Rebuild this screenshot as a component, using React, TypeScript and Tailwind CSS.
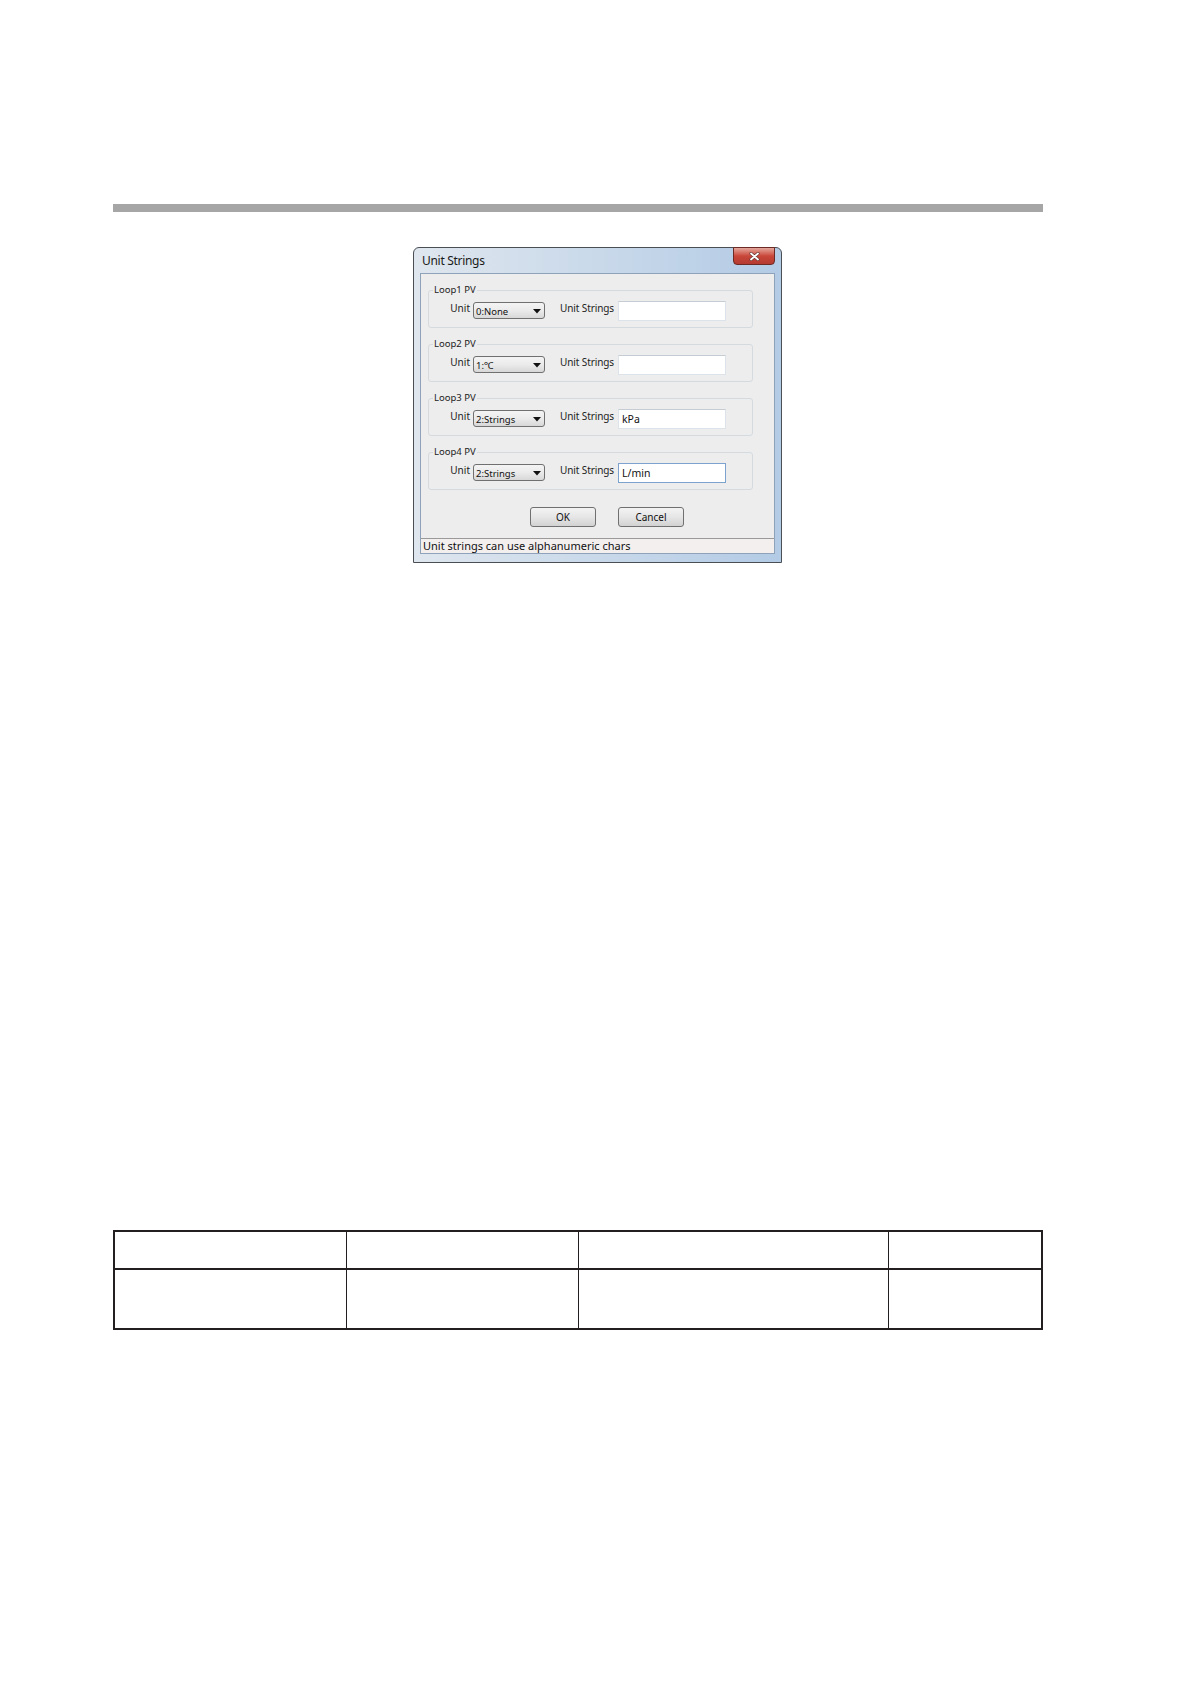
import React from 'react';

const FONT = { fontFamily: '"Noto Sans", "Open Sans", sans-serif' };

function Combo({ value }: { value: string }) {
  return (
    <div className="mt-[1px] ml-[3px] flex h-[17px] w-[72px] items-center justify-between rounded-[3px] border border-[#707070] bg-gradient-to-b from-[#f4f4f4] via-[#ebebeb] to-[#d8d8d8] pl-[2px] pr-[3px]">
      <span className="text-[9.5px] leading-[12px] text-[#111] mt-[2px]">{value}</span>
      <svg width="8" height="5" viewBox="0 0 8 5" className="mt-[1px]">
        <path d="M0 0 H8 L4 4.5 Z" fill="#111" />
      </svg>
    </div>
  );
}

function LoopGroup({
  title,
  unit,
  text,
  focused,
  first,
}: {
  title: string;
  unit: string;
  text: string;
  focused?: boolean;
  first?: boolean;
}) {
  return (
    <fieldset
      className={`w-[325px] rounded-[3px] border border-[#d5dadf] ${first ? '' : 'mt-[10px]'}`}
    >
      <legend className="ml-[4px] px-[1px] text-[9.5px] leading-[12px] text-[#222]">{title}</legend>
      <div className="flex items-start pl-[21px] pt-[5px] pb-[6px]">
        <span className="mt-[1px] w-[20px] text-right text-[10px] leading-[12px] text-[#222]">Unit</span>
        <Combo value={unit} />
        <span className="ml-[15px] mt-[1px] w-[53px] whitespace-nowrap text-[10px] leading-[12px] tracking-[-0.1px] text-[#222]">
          Unit Strings
        </span>
        <div
          className={`ml-[5px] flex h-[20px] w-[108px] items-center border bg-white pl-[3px] text-[10.5px] leading-[12px] text-[#111] ${
            focused ? 'border-[#7da2ce]' : 'border-[#dde3ea] border-t-[#c5ccd4]'
          }`}
        >
          {text}
        </div>
      </div>
    </fieldset>
  );
}

function Dialog() {
  return (
    <div
      style={FONT}
      className="ml-[300px] mt-[35px] flex h-[316px] w-[369px] flex-col rounded-t-[6px] border border-[#4a4f55] bg-gradient-to-r from-[#dfe6ee] via-[#c9d9ea] to-[#b3cbe5] px-[6px] pb-[8px]"
    >
      <div className="flex h-[25px] items-start justify-between">
        <span className="mt-[5px] pl-[2px] text-[12px] leading-[16px] tracking-[-0.3px] text-[#1a1a1a]">
          Unit Strings
        </span>
        <div className="-mt-[1px] flex h-[18px] w-[42px] items-center justify-center rounded-b-[4px] border border-[#6b2a24] bg-gradient-to-b from-[#e3a69c] via-[#c9463a] to-[#b53a30]">
          <svg width="11" height="9" viewBox="0 0 11 9">
            <path d="M2 1.5 L9 7.5 M9 1.5 L2 7.5" stroke="#6a3a35" strokeWidth="3.2" strokeLinecap="round" />
            <path d="M2 1.5 L9 7.5 M9 1.5 L2 7.5" stroke="#ffffff" strokeWidth="1.8" strokeLinecap="round" />
          </svg>
        </div>
      </div>
      <div className="flex flex-1 flex-col border border-[#8ea2b9] bg-[#ededed]">
        <div className="pl-[7px] pt-[10px]">
          <LoopGroup first title="Loop1 PV" unit="0:None" text="" />
          <LoopGroup title="Loop2 PV" unit="1:℃" text="" />
          <LoopGroup title="Loop3 PV" unit="2:Strings" text="kPa" />
          <LoopGroup title="Loop4 PV" unit="2:Strings" text="L/min" focused />
        </div>
        <div className="mt-[17px] flex gap-[22px] pl-[109px]">
          {['OK', 'Cancel'].map((b) => (
            <div
              key={b}
              className="flex h-[20px] w-[66px] items-center justify-center rounded-[3px] border border-[#707070] bg-gradient-to-b from-[#f3f3f3] via-[#e6e6e6] to-[#d2d2d2] text-[10px] leading-[12px] text-[#111]"
            >
              {b}
            </div>
          ))}
        </div>
        <div className="mt-auto flex h-[15px] items-center border-t border-[#9a9a9a] bg-[#f3efef] pl-[2px] text-[11px] leading-[14px] text-[#111]">
          Unit strings can use alphanumeric chars
        </div>
      </div>
    </div>
  );
}

export default function App() {
  return (
    <div className="min-h-[1684px] bg-white pt-[204px]">
      <div className="ml-[113px] w-[930px]">
        <div className="h-[8px] w-full bg-[#a6a6a6]" />
        <Dialog />
        <div className="mt-[667px] w-[930px] border-2 border-[#231f20]">
          <div className="grid h-[38px] grid-cols-[231px_232px_310px_153px] border-b-2 border-[#231f20]">
            <div />
            <div className="border-l border-[#231f20]" />
            <div className="border-l border-[#231f20]" />
            <div className="border-l border-[#231f20]" />
          </div>
          <div className="grid h-[58px] grid-cols-[231px_232px_310px_153px]">
            <div />
            <div className="border-l border-[#231f20]" />
            <div className="border-l border-[#231f20]" />
            <div className="border-l border-[#231f20]" />
          </div>
        </div>
      </div>
    </div>
  );
}
